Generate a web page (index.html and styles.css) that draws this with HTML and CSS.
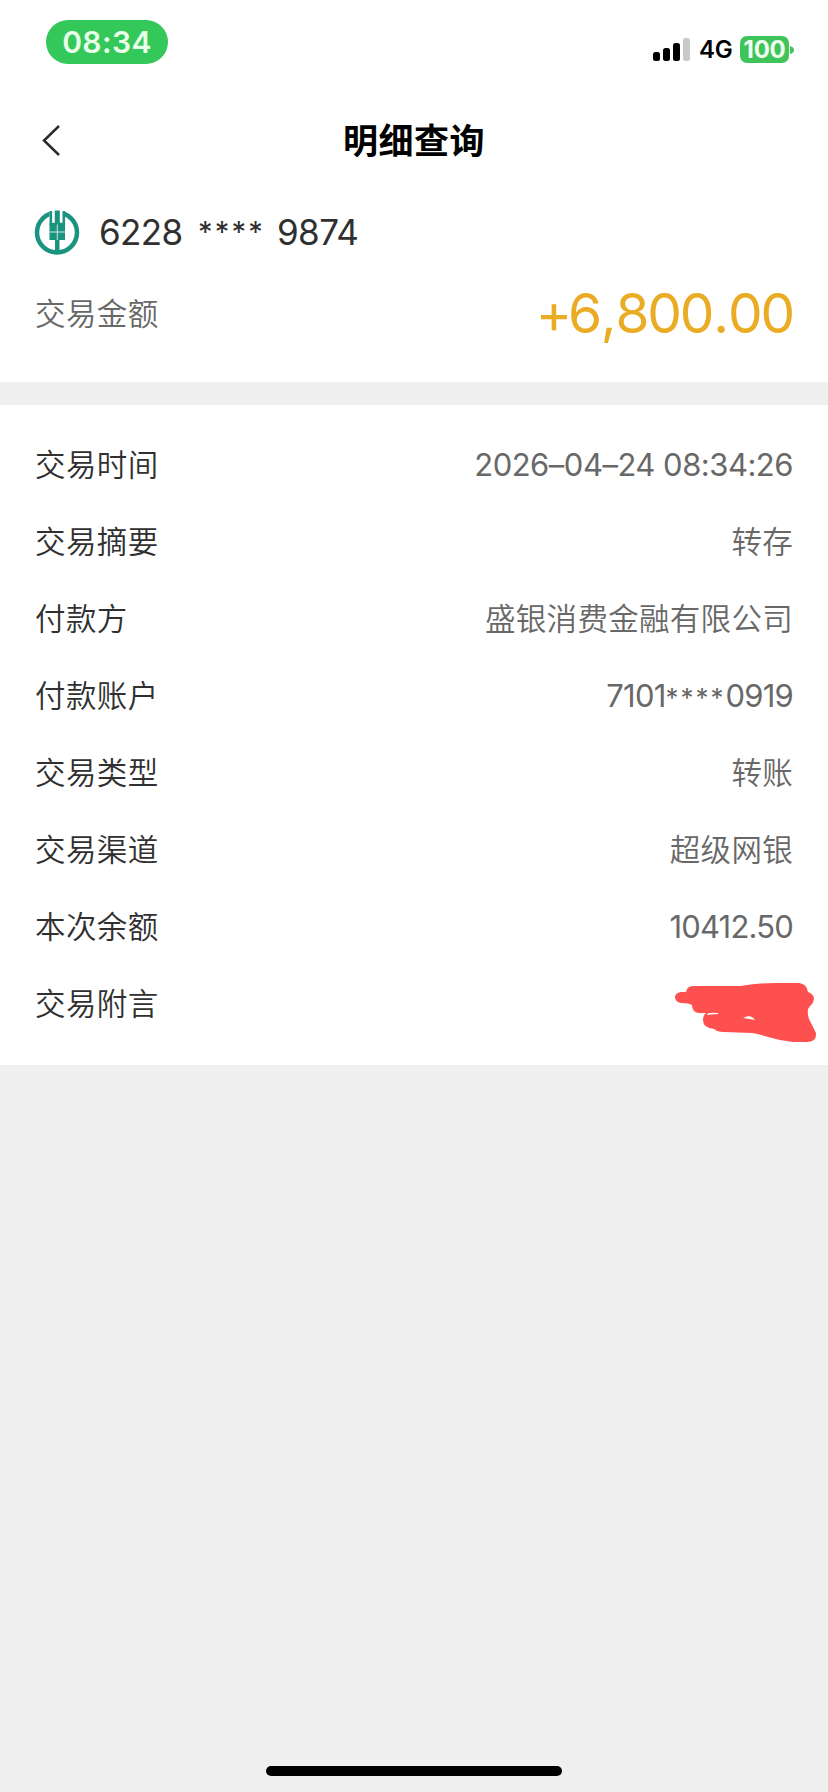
FILE: index.html
```html
<!DOCTYPE html>
<html lang="zh-CN">
<head>
<meta charset="utf-8">
<title>明细查询</title>
<link rel="stylesheet" href="styles.css">
</head>
<body>
<div class="screen">
  <header class="status">
    <span class="clock">08:34</span>
    <div class="indicators">
      <svg class="signal" width="38" height="24" viewBox="0 0 38 24"><rect x="0" y="14" width="7" height="9" rx="2.5"/><rect x="10" y="10" width="7" height="13" rx="2.5"/><rect x="20" y="5" width="7" height="18" rx="2.5"/><rect x="30" y="0" width="7" height="23" rx="2.5" fill="#c9c9c9"/></svg>
      <span class="network">4G</span>
      <span class="battery">100</span>
      <svg class="battery-tip" width="4" height="8" viewBox="0 0 4 8"><path d="M0 0Q4 1 4 4Q4 7 0 8Z" fill="#3fc35b"/></svg>
    </div>
  </header>
  <nav class="nav">
    <svg class="back" width="20" height="34" viewBox="0 0 20 34"><path d="M18 3L3 17.500L18 32" fill="none" stroke="#2b2b2b" stroke-width="2.500"/></svg>
    <h1 class="title">明细查询</h1>
  </nav>
  <section class="summary">
    <div class="card">
      <svg class="bank" width="46" height="46" viewBox="0 0 46 46">
        <circle cx="23" cy="23.500" r="20" fill="none" stroke="#1b9381" stroke-width="4.500"/>
        <path d="M15.500 0H31V10H15.500Z" fill="#fff"/>
        <path d="M16.800 2V15H29.800V2" fill="none" stroke="#1b9381" stroke-width="2.600"/>
        <path d="M20.800 1.500H25.800V16H20.800Z" fill="#1b9381"/>
        <path d="M15.500 14.500H31V31H25.500V43H21V31H15.500Z" fill="#1b9381"/>
        <path d="M23.300 15.500V31M16 23H31" stroke="#c8ebe4" stroke-width="1"/>
      </svg>
      <div class="number"><span class="first">6228</span><span class="stars">****</span><span class="last">9874</span></div>
    </div>
    <div class="total">
      <span class="label muted">交易金额</span>
      <span class="amount"><span class="plus">+</span>6<span class="comma">,</span>800<span class="point">.</span>00</span>
    </div>
  </section>
  <section class="details">
    <div class="row"><span class="label">交易时间</span><span class="value date">2026–04–24 08:34:26</span></div>
    <div class="row"><span class="label">交易摘要</span><span class="value">转存</span></div>
    <div class="row"><span class="label">付款方</span><span class="value">盛银消费金融有限公司</span></div>
    <div class="row"><span class="label">付款账户</span><span class="value account">7101<span class="mask">****</span>0919</span></div>
    <div class="row"><span class="label">交易类型</span><span class="value">转账</span></div>
    <div class="row"><span class="label">交易渠道</span><span class="value">超级网银</span></div>
    <div class="row"><span class="label">本次余额</span><span class="value balance">10412.50</span></div>
    <div class="row"><span class="label">交易附言</span>
      <svg class="scribble" width="142" height="62" viewBox="0 0 142 62"><path fill="#ff5050" fill-rule="evenodd" d="M6 10H11Q12 4 18 4H65Q85 1 100 1H124Q132 2 133 10Q139 12 139 17Q138 22 135 24Q131 28 134 37Q137 43 141 51Q142 60 132 60H118Q106 59 93 55Q84 52 77 51L49 50Q42 50 39 47Q28 46 28 38Q28 33 31 31H24Q17 30 17 23Q14 21 6 21Q0 20 0 15Q0 11 6 10ZM32 33Q39 32 44 32Q42 30 35 31Q32 31 32 33ZM68 36Q75 37 80 38Q77 34 73 34Z"/></svg>
    </div>
  </section>
  <footer class="footer"><div class="home"></div></footer>
</div>
</body>
</html>
```
FILE: styles.css
```css
* { box-sizing: border-box; }
body { margin: 0; background: #efefef; font-family: Inter, "Noto Sans CJK SC", sans-serif; }
.screen { width: 828px; height: 1792px; display: flex; flex-direction: column; background: #efefef; color: #303030; overflow: hidden; }
.status { height: 100px; padding: 20px 34px 0 46px; display: flex; justify-content: space-between; align-items: flex-start; background: #fff; }
.clock { width: 122px; height: 44px; border-radius: 22px; background: #34c759; color: #e8ffe9; font-size: 30px; font-weight: 600; line-height: 45px; text-align: center; letter-spacing: .4px; }
.indicators { display: flex; align-items: center; margin-top: 16px; height: 28px; }
.signal { margin-right: 8px; }
.network { width: 34px; margin-right: 7px; color: #000; font-size: 24px; font-weight: 600; line-height: 28px; letter-spacing: -.3px; white-space: nowrap; }
.battery { width: 49px; height: 27px; margin-top: -1px; border-radius: 7px; background: #3fc35b; color: #efffed; font-size: 24px; font-weight: 700; line-height: 27px; text-align: center; letter-spacing: -.3px; }
.battery-tip { margin-left: 1px; }
.nav { height: 80px; padding: 0 41px; display: grid; grid-template-columns: 40px 1fr 40px; align-items: center; background: #fff; }
.title { margin: -2px 0 0; color: #000; font-family: "Noto Sans CJK SC", sans-serif; font-size: 35px; font-weight: 700; line-height: 50px; letter-spacing: .5px; text-align: center; white-space: nowrap; }
.summary { height: 202px; padding: 24px 35px 0 34px; background: #fff; }
.card { height: 56px; display: flex; align-items: center; }
.number { display: flex; margin-left: 19px; font-size: 35px; font-weight: 400; line-height: 56px; letter-spacing: -.6px; }
.first { width: 99px; }
.stars { width: 79px; font-size: 29px; letter-spacing: 2.2px; }
.total { height: 72px; margin-top: 17px; display: flex; justify-content: space-between; align-items: center; }
.label { position: relative; top: -2px; font-family: "Noto Sans CJK SC", sans-serif; font-size: 30.5px; font-weight: 350; letter-spacing: .4px; }
.muted { top: -1px; margin-left: 1px; color: #686868; }
.amount { color: #eaac24; font-size: 55px; font-weight: 400; letter-spacing: -2.2px; }
.plus { margin-right: -2px; }
.comma { margin: 0 1px; }
.point { margin: 0 1px; }
.details { height: 660px; margin-top: 23px; padding-top: 21px; background: #fff; }
.row { height: 77px; padding: 0 35px; display: flex; justify-content: space-between; align-items: center; position: relative; }
.value { position: relative; top: -2px; color: #686868; font-size: 30.5px; font-weight: 350; letter-spacing: .3px; white-space: nowrap; }
.date, .account, .balance { top: 0; font-size: 31px; font-weight: 400; }
.date { letter-spacing: -.5px; }
.account, .balance { letter-spacing: -.8px; }
.mask { font-size: 26px; letter-spacing: 2px; }
.scribble { position: absolute; right: 11px; top: 17px; overflow: visible; }
.footer { flex: 1; display: flex; justify-content: center; align-items: flex-end; padding-bottom: 16px; }
.home { width: 296px; height: 10px; border-radius: 5px; background: #000; }
```
